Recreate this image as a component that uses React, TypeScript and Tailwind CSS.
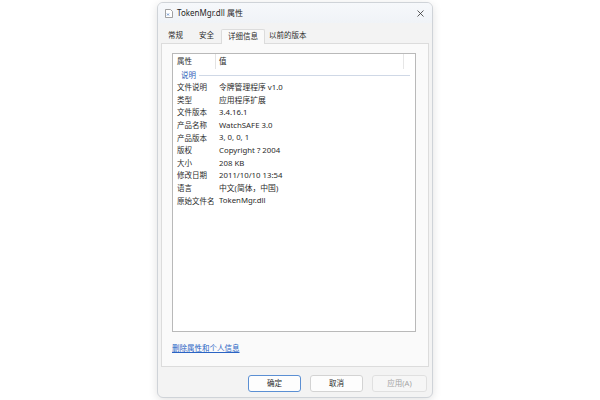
const rows: [string, string][] = [
  ['文件说明', '令牌管理程序 v1.0'],
  ['类型', '应用程序扩展'],
  ['文件版本', '3.4.16.1'],
  ['产品名称', 'WatchSAFE 3.0'],
  ['产品版本', '3, 0, 0, 1'],
  ['版权', 'Copyright ? 2004'],
  ['大小', '208 KB'],
  ['修改日期', '2011/10/10 13:54'],
  ['语言', '中文(简体，中国)'],
  ['原始文件名', 'TokenMgr.dll'],
];

const tabs = ['常规', '安全', '详细信息', '以前的版本'];

function FileIcon() {
  return (
    <svg width="8" height="9" viewBox="0 0 8 9" className="shrink-0">
      <path d="M0.5 0.5h5l2 2v6h-7z" fill="#fff" stroke="#8a8a8a" strokeWidth="0.8" />
      <path d="M2 4.5l2 2M4 4.5l-2 2" stroke="#4a7bc0" strokeWidth="0.8" />
    </svg>
  );
}

export default function App() {
  return (
    <div
      className="w-[600px] h-[400px] bg-white flex items-start pl-[157px] pt-[2px]"
      style={{ fontFamily: '"Noto Sans", "Noto Sans CJK SC", sans-serif' }}
    >
      <div className="w-[276px] h-[396px] rounded-[6px] border border-[#cfd3d8] bg-[#f3f3f3] shadow-[0_2px_10px_rgba(0,0,0,0.12)] flex flex-col overflow-hidden text-[7.5px] text-[#2b2b2b]">
        {/* title bar */}
        <div className="h-[20px] shrink-0 bg-gradient-to-b from-[#f6f8fb] to-[#f0f3f7] flex items-center pl-[7px] pr-[8px] gap-[4px]">
          <FileIcon />
          <span className="text-[8px] text-[#1f1f1f]">TokenMgr.dll 属性</span>
          <svg width="7" height="7" viewBox="0 0 7 7" className="ml-auto">
            <path d="M0.5 0.5l6 6M6.5 0.5l-6 6" stroke="#333" strokeWidth="0.8" />
          </svg>
        </div>

        {/* tabs */}
        <div className="flex items-end h-[20px] shrink-0 px-[3px]">
          {tabs.map((t, i) =>
            i === 2 ? (
              <div key={t} className="h-[15px] px-[6px] flex items-center bg-[#fafafa] border border-b-0 border-[#dcdcdc] rounded-t-[2px] relative top-[1px]">
                {t}
              </div>
            ) : (
              <div key={t} className={`h-[14px] flex items-center ${i === 0 ? 'pl-[7px] pr-[9px]' : i === 1 ? 'px-[7px]' : 'px-[4px]'}`}>
                {t}
              </div>
            )
          )}
        </div>

        {/* panel */}
        <div className="mx-[3px] h-[324px] shrink-0 bg-[#fafafa] border border-[#dcdcdc] flex flex-col pl-[10px] pr-[12px] pt-[9px]">
          <div className="h-[279px] bg-white border border-[#b9b9b9] flex flex-col">
            <div className="h-[15px] flex items-center relative">
              <span className="w-[42px] pl-[4px]">属性</span>
              <div className="w-px h-full bg-[#e3e3e3]" />
              <span className="pl-[3px]">值</span>
              <div className="absolute right-[11px] top-0 w-px h-full bg-[#e6e6e6]" />
            </div>
            <div className="h-[12.6px] flex items-center pl-[8px] pr-[5px] gap-[3px]">
              <span className="text-[#2e62b8]">说明</span>
              <div className="flex-1 h-px bg-[#cfd8e6]" />
            </div>
            {rows.map(([k, v]) => (
              <div key={k} className="h-[12.6px] flex items-center">
                <span className="w-[43px] pl-[4px] whitespace-nowrap">{k}</span>
                <span className="pl-[3px] whitespace-nowrap text-[7.8px]">{v}</span>
              </div>
            ))}
          </div>
          <div className="mt-[11px] text-[#2a64c4] underline">删除属性和个人信息</div>
        </div>

        {/* buttons */}
        <div className="flex justify-end gap-[9px] pr-[5px] pt-[8px]">
          <button className="w-[53px] h-[17px] bg-[#fdfdfd] border border-[#5b8fd3] rounded-[3px] text-[7.5px]">确定</button>
          <button className="w-[53px] h-[17px] bg-[#fdfdfd] border border-[#d3d3d3] rounded-[3px] text-[7.5px]">取消</button>
          <button className="w-[55px] h-[17px] bg-[#f6f6f6] border border-[#e0e0e0] rounded-[3px] text-[7.5px] text-[#a3a3a3]">应用(A)</button>
        </div>
      </div>
    </div>
  );
}
